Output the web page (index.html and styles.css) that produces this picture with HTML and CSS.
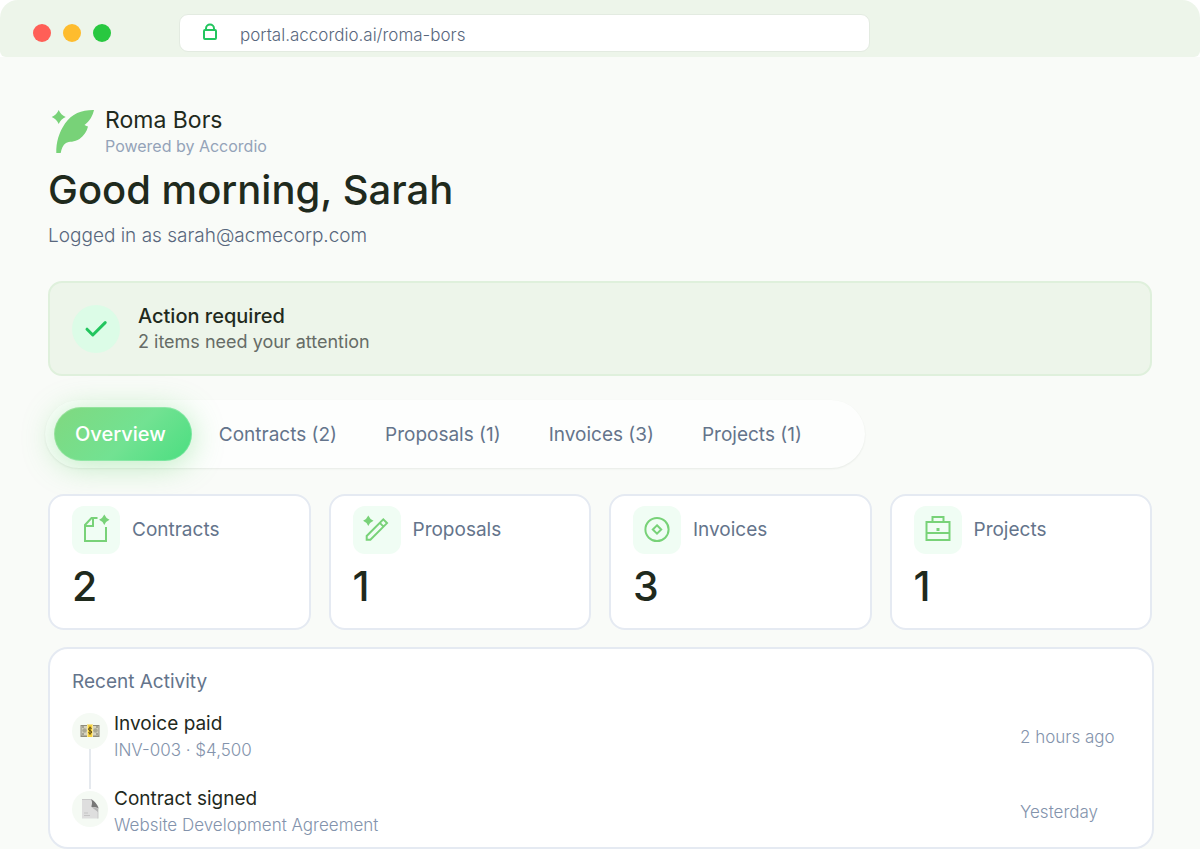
FILE: index.html
```html
<!DOCTYPE html>
<html lang="en">
<head>
<meta charset="utf-8">
<meta name="viewport" content="width=device-width, initial-scale=1">
<title>Roma Bors client portal</title>
<link rel="stylesheet" href="styles.css">
</head>
<body>
<header class="browser-bar">
  <div class="lights"><span class="light red"></span><span class="light yellow"></span><span class="light green"></span></div>
  <div class="address">
    <svg class="lock" viewBox="0 0 16 18" aria-hidden="true"><rect x="2" y="7" width="12" height="9" rx="1"/><path d="M4 7V5.500a4 4 0 0 1 8 0V7"/></svg>
    <span>portal.accordio.ai/roma-bors</span>
  </div>
</header>
<main class="portal">
  <div class="brand">
    <svg class="logo" viewBox="0 0 48 48" aria-hidden="true"><path d="M46 4C34 3.800 24 7.500 17 17.500C11 26.500 8 36 8.300 47H12.700C13.500 43 14.800 39 18 37C21 35.200 26.500 36.500 31.500 33C36 29.800 39 25 40 20.500C39 20.300 38 19.800 36.500 19C41.500 15.500 44.500 10 46 4Z"/><path d="M10.700 4Q12.800 8.900 17.700 11Q12.800 13.100 10.700 18Q8.600 13.100 3.700 11Q8.600 8.900 10.700 4Z"/></svg>
    <div>
      <p class="brand-name">Roma Bors</p>
      <p class="brand-sub">Powered by Accordio</p>
    </div>
  </div>
  <h1 class="greeting">Good morning, Sarah</h1>
  <p class="login">Logged in as sarah@acmecorp.com</p>

  <section class="alert">
    <svg class="check" viewBox="0 0 48 48" aria-hidden="true"><circle cx="24" cy="24" r="24"/><path d="M15 24.200L20.800 30L33.200 17.600"/></svg>
    <div>
      <h2 class="alert-title">Action required</h2>
      <p class="alert-text">2 items need your attention</p>
    </div>
  </section>

  <nav class="tabs">
    <button class="tab active" type="button">Overview</button>
    <button class="tab" type="button">Contracts (2)</button>
    <button class="tab" type="button">Proposals (1)</button>
    <button class="tab" type="button">Invoices (3)</button>
    <button class="tab" type="button">Projects (1)</button>
  </nav>

  <section class="stats">
    <article class="stat">
      <div class="stat-head">
        <svg class="tile" viewBox="0 0 48 48" aria-hidden="true"><path class="line" d="M34 21V35H13V19L19.500 12H25.500M13 20H21V12"/><path class="solid" d="M32.300 8.500Q33.800 12.200 37.500 13.700Q33.800 15.200 32.300 18.900Q30.800 15.200 27.100 13.700Q30.800 12.200 32.300 8.500Z"/></svg>
        <h3 class="stat-label">Contracts</h3>
      </div>
      <p class="stat-value">2</p>
    </article>
    <article class="stat">
      <div class="stat-head">
        <svg class="tile" viewBox="0 0 48 48" aria-hidden="true"><path class="line" d="M13.700 33.700V30L30.300 13.400L34 17.100L17.400 33.700ZM26.800 16.900L30.500 20.600"/><path class="solid" d="M15.300 9.500Q16.800 13.200 20.500 14.700Q16.800 16.200 15.300 19.900Q13.800 16.200 10.100 14.700Q13.800 13.200 15.300 9.500Z"/></svg>
        <h3 class="stat-label">Proposals</h3>
      </div>
      <p class="stat-value">1</p>
    </article>
    <article class="stat">
      <div class="stat-head">
        <svg class="tile" viewBox="0 0 48 48" aria-hidden="true"><circle class="line" cx="24" cy="23.500" r="11.600"/><path class="line" d="M24 19.300L28.200 23.500L24 27.700L19.800 23.500Z"/></svg>
        <h3 class="stat-label">Invoices</h3>
      </div>
      <p class="stat-value">3</p>
    </article>
    <article class="stat">
      <div class="stat-head">
        <svg class="tile" viewBox="0 0 48 48" aria-hidden="true"><path class="line" d="M12.500 16H35.500V34H12.500ZM12.500 27H35.500M18.500 16V11H29.500V16"/><path class="solid" d="M22.500 22H25.500V25H22.500Z"/></svg>
        <h3 class="stat-label">Projects</h3>
      </div>
      <p class="stat-value">1</p>
    </article>
  </section>

  <section class="activity">
    <h2 class="activity-title">Recent Activity</h2>
    <div class="feed">
      <div class="rail">
        <span class="dot">
          <svg class="glyph" viewBox="0 0 20 20" aria-hidden="true"><rect x="0.500" y="4" width="19" height="12" fill="#8f8c7c"/><rect x="1.500" y="5" width="17" height="9.500" fill="#d5d2bf"/><circle cx="4.500" cy="9.500" r="2.300" fill="#aaa894"/><circle cx="15.500" cy="9.500" r="2.300" fill="#aaa894"/><path d="M2 6h2M2 13h2M16 6h2M16 13h2" stroke="#777568"/><rect x="7" y="3.500" width="6" height="12.500" fill="#f6d13d"/><path d="M7.500 3.500V16M12.500 3.500V16" stroke="#fbe89a"/><path d="M11.700 7.500C11 6.500 8.500 6.600 8.500 8.200C8.500 10 11.700 9.200 11.700 11.100C11.700 12.700 9 12.700 8.300 11.500M10 5.500V13.800" stroke="#5c4a12" fill="none"/></svg>
        </span>
        <span class="connector"></span>
        <span class="dot">
          <svg class="glyph" viewBox="0 0 20 20" aria-hidden="true"><path d="M2 0.500H12L18 8V19.500H2Z" fill="#dedede"/><path d="M2 0.500H12L18 8V19.500" fill="none" stroke="#c9c9c9"/><path d="M11 0.500C13 3 11.500 6 11.500 8C14 8.500 16.500 7.500 18.500 9.500C18 6 14 1.500 11 0.500Z" fill="#777"/><path d="M12 8.500C15 9 17 8.500 18 10V13Z" fill="#b5b5b5"/><path d="M4 14H8M4 16.500H10" stroke="#c4c4c4"/></svg>
        </span>
      </div>
      <ul class="events">
        <li class="event">
          <div><p class="event-title">Invoice paid</p><p class="event-sub">INV-003 · $4,500</p></div>
          <time class="event-time">2 hours ago</time>
        </li>
        <li class="event">
          <div><p class="event-title">Contract signed</p><p class="event-sub">Website Development Agreement</p></div>
          <time class="event-time">Yesterday</time>
        </li>
      </ul>
    </div>
  </section>
</main>
</body>
</html>
```
FILE: styles.css
```css
* { box-sizing: border-box; }
body { min-height: 100vh; margin: 0; background: #fff; color: #1f2a1d; font-family: Inter, "Noto Sans", sans-serif; }
h1, h2, h3, p, ul { margin: 0; padding: 0; font-weight: 400; list-style: none; }

.browser-bar { display: flex; align-items: center; gap: 68px; height: 57px; padding: 9px 32px 0 33px; background: #edf5ea; border-radius: 18px 18px 6px 6px; }
.lights { display: flex; gap: 12px; }
.light { width: 18px; height: 18px; border-radius: 50%; }
.red { background: #ff5f57; }
.yellow { background: #febc2e; }
.green { background: #28c840; }
.address { display: flex; flex: 1; align-items: center; gap: 22px; max-width: 691px; height: 38px; padding: 3px 22px 0; background: #fff; border: 1px solid #e3ebe1; border-radius: 9px; color: #58677d; font-size: 17px; font-weight: 300; }
.lock { width: 16px; height: 18px; margin-bottom: 6px; fill: none; stroke: #22c55e; stroke-width: 2; }

.portal { padding: 48px 48px 0; background: #f9fbf8; }
.brand { display: flex; gap: 9px; }
.logo { width: 48px; height: 48px; margin-top: 1px; fill: #78d278; }
.brand-name { font-size: 23px; line-height: 30px; }
.brand-sub { color: #94a3b8; font-size: 16px; line-height: 22px; }
.greeting { margin-top: 3px; font-size: 40px; font-weight: 500; line-height: 60px; }
.login { color: #58677d; font-size: 19px; font-weight: 300; line-height: 32px; }

.alert { display: flex; align-items: center; gap: 18px; margin-top: 29px; padding: 20px 22px 19px; background: #edf5ea; border: 2px solid #dff0dc; border-radius: 14px; }
.check { width: 48px; height: 48px; fill: #dcfce7; }
.check path { fill: none; stroke: #22c55e; stroke-width: 3; stroke-linecap: round; stroke-linejoin: round; }
.alert-title { font-size: 20px; font-weight: 500; line-height: 26px; }
.alert-text { color: #666c66; font-size: 18px; line-height: 26px; }

.tabs { display: flex; align-items: center; max-width: 820px; margin: 24px 0 0 -3px; padding: 7px 9px; border-radius: 35px; background: #fdfefd; box-shadow: 0 1px 2px rgba(30, 50, 30, 0.08); }
.tab { height: 54px; padding: 0 24px; border: 0; border-radius: 27px; background: none; color: #64748b; font-family: inherit; font-size: 19px; }
.active { margin-right: 3px; padding: 0 26px 0 21px; background: linear-gradient(135deg, #80d87f 0%, #72e292 55%, #4ade80 100%); box-shadow: 0 4px 32px rgba(90, 210, 100, 0.4), inset 0 0 0 1px rgba(255, 255, 255, 0.2); color: #fff; font-size: 20px; font-weight: 500; }

.stats { display: grid; grid-template-columns: repeat(4, 1fr); gap: 18px; margin-top: 26px; }
.stat { padding: 10px 22px 12px; background: #fff; border: 2px solid #e5eaf2; border-radius: 16px; }
.stat-head { display: flex; align-items: center; gap: 12px; }
.tile { width: 48px; height: 48px; border-radius: 12px; background: #f0fdf4; }
.line { fill: none; stroke: #78d278; stroke-width: 2; }
.solid { fill: #78d278; }
.stat-label { color: #64748b; font-size: 19px; line-height: 24px; }
.stat-value { margin-top: 2px; font-size: 41px; font-weight: 500; line-height: 60px; }

.activity { margin: 17px -2px -9px 0; padding: 18px 22px 9px; background: #fff; border: 2px solid #e5eaf2; border-radius: 20px; }
.activity-title { color: #64748b; font-size: 19px; line-height: 30px; }
.feed { display: flex; gap: 6px; margin-top: 14px; }
.rail { display: flex; flex-direction: column; align-items: center; padding-top: 2px; }
.dot { display: grid; place-items: center; width: 36px; height: 36px; border-radius: 50%; background: #f5faf4; }
.glyph { width: 20px; height: 20px; }
.connector { width: 2px; height: 40px; margin-bottom: 2px; background: #e5e9ee; }
.events { display: flex; flex: 1; flex-direction: column; gap: 23px; }
.event { display: flex; align-items: center; justify-content: space-between; gap: 24px; }
.event-title { font-size: 19px; line-height: 26px; }
.event-sub, .event-time { color: #8393ac; font-size: 17px; font-weight: 300; line-height: 26px; }
.event-time { width: 110px; white-space: nowrap; }
```
